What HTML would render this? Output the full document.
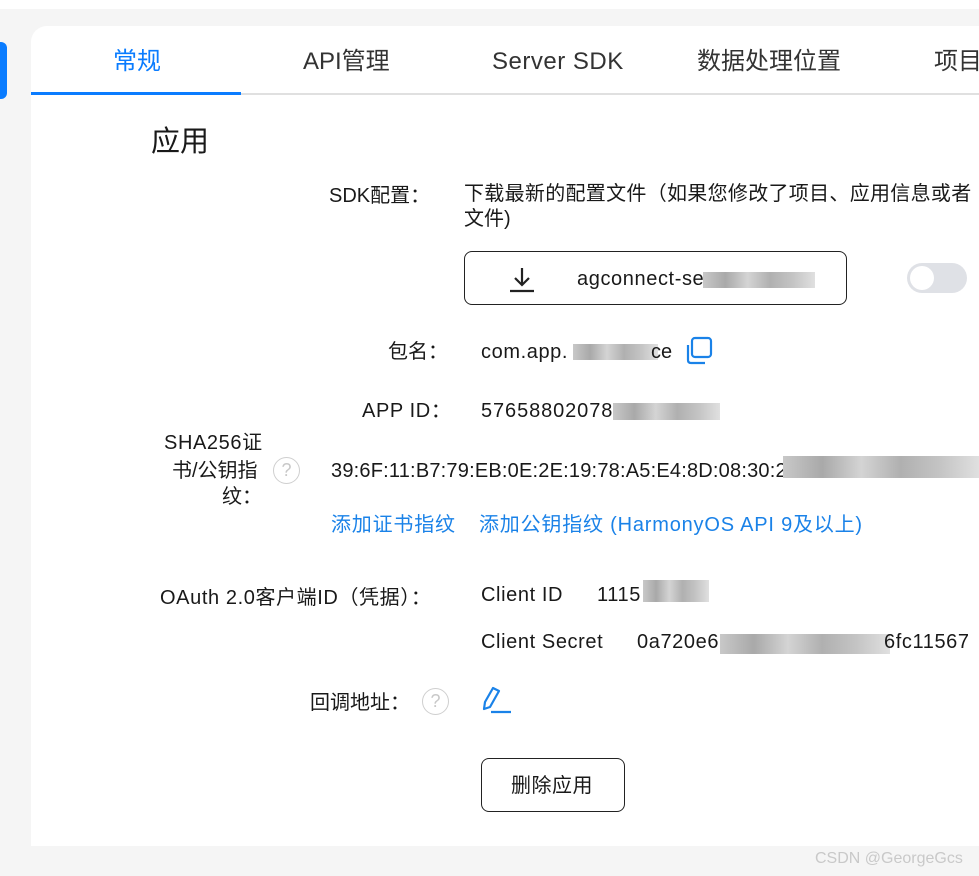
<!DOCTYPE html>
<html><head><meta charset="utf-8"><style>
*{margin:0;padding:0;box-sizing:border-box}
body{width:979px;height:876px;background:#f5f5f5;position:relative;overflow:hidden;font-family:"Liberation Sans","Noto Sans CJK SC",sans-serif;color:#191919}
.top{position:absolute;left:0;top:0;width:979px;height:9px;background:#fff}
.pill{position:absolute;left:-6px;top:42px;width:13px;height:57px;background:#0a7cff;border-radius:6px}
.card{position:absolute;left:31px;top:26px;width:960px;height:820px;background:#fff;border-radius:16px 0 0 0}
.t{position:absolute;white-space:nowrap;font-size:20px;line-height:24px}
.ls{letter-spacing:0.6px}
.tab{position:absolute;top:48px;font-size:24px;line-height:28px;color:#333;white-space:nowrap}
.blur{position:absolute;background:linear-gradient(90deg,#c8c8c8,#a9a9a9,#d4d4d4,#b0b0b0,#c4c4c4,#e0e0e0)}
.blue{color:#1a82e8}
.q{position:absolute;width:27px;height:27px;border:1.5px solid #cfcfcf;border-radius:50%;color:#c8c8c8;font-size:18px;line-height:24px;text-align:center}
</style></head><body>
<div class="top"></div>
<div class="pill"></div>
<div class="card"></div>
<div class="tab" style="left:113px;color:#0a7cff">常规</div>
<div class="tab" style="left:303px">API管理</div>
<div class="tab" style="left:492px;letter-spacing:0.5px">Server SDK</div>
<div class="tab" style="left:697px">数据处理位置</div>
<div class="tab" style="left:934px">项目</div>
<div style="position:absolute;left:240px;top:93px;width:739px;height:2px;background:#e0e0e0"></div>
<div style="position:absolute;left:31px;top:92px;width:210px;height:3px;background:#0a7cff"></div>

<div class="t" style="left:151px;top:124px;font-size:29px;line-height:36px">应用</div>
<div class="t" style="left:329px;top:184px">SDK配置：</div>
<div class="t" style="left:464px;top:182px;letter-spacing:0.3px">下载最新的配置文件（如果您修改了项目、应用信息或者</div>
<div class="t" style="left:464px;top:207px">文件)</div>
<div style="position:absolute;left:464px;top:251px;width:383px;height:54px;border:1.5px solid #222;border-radius:8px"></div>
<svg style="position:absolute;left:507px;top:264px" width="30" height="30" viewBox="0 0 30 30"><path d="M15 4V21M8 14L15 21L22 14M3 27H27" stroke="#222" stroke-width="2.2" fill="none"/></svg>
<div class="t ls" style="left:577px;top:267px">agconnect-se</div>
<div class="blur" style="left:703px;top:272px;width:112px;height:16px"></div>
<div style="position:absolute;left:907px;top:263px;width:60px;height:30px;border-radius:15px;background:#dfe1e6"></div>
<div style="position:absolute;left:910px;top:266px;width:24px;height:24px;border-radius:50%;background:#fff"></div>

<div class="t" style="left:388px;top:340px">包名：</div>
<div class="t ls" style="left:481px;top:340px">com.app.</div>
<div class="blur" style="left:573px;top:344px;width:85px;height:16px"></div>
<div class="t" style="left:651px;top:340px">ce</div>
<svg style="position:absolute;left:684px;top:336px" width="30" height="30" viewBox="0 0 30 30"><rect x="8" y="2" width="19" height="19" rx="3" stroke="#1a82e8" stroke-width="2.2" fill="none"/><path d="M4 9V24Q4 27 7 27H21" stroke="#1a82e8" stroke-width="2.2" fill="none"/></svg>

<div class="t ls" style="left:362px;top:399px">APP ID：</div>
<div class="t" style="left:481px;top:399px;letter-spacing:0.9px">57658802078</div>
<div class="blur" style="left:613px;top:403px;width:107px;height:17px"></div>

<div class="t ls" style="left:164px;top:431px">SHA256证</div>
<div class="t" style="left:172px;top:459px">书/公钥指</div>
<div class="t" style="left:222px;top:485px">纹：</div>
<div class="q" style="left:273px;top:457px">?</div>
<div class="t" style="left:331px;top:459px;letter-spacing:0.2px">39:6F:11:B7:79:EB:0E:2E:19:78:A5:E4:8D:08:30:20:</div>
<div class="blur" style="left:783px;top:456px;width:196px;height:22px"></div>

<div class="t blue" style="left:331px;top:513px;letter-spacing:0.8px">添加证书指纹</div>
<div class="t blue" style="left:479px;top:513px;letter-spacing:0.8px">添加公钥指纹 (HarmonyOS API 9及以上)</div>

<div class="t ls" style="left:160px;top:586px">OAuth 2.0客户端ID（凭据）：</div>
<div class="t ls" style="left:481px;top:583px">Client ID</div>
<div class="t ls" style="left:597px;top:583px">1115</div>
<div class="blur" style="left:643px;top:580px;width:66px;height:22px"></div>
<div class="t ls" style="left:481px;top:630px">Client Secret</div>
<div class="t ls" style="left:637px;top:630px">0a720e6</div>
<div class="blur" style="left:720px;top:634px;width:170px;height:20px"></div>
<div class="t ls" style="left:884px;top:630px">6fc11567</div>

<div class="t" style="left:310px;top:691px">回调地址：</div>
<div class="q" style="left:422px;top:688px">?</div>
<svg style="position:absolute;left:481px;top:685px" width="32" height="32" viewBox="0 0 32 32"><path d="M12 3L18 6L9 22L3 24L4 17Z" stroke="#1a82e8" stroke-width="2.2" fill="none" stroke-linejoin="round"/><path d="M10 27H30" stroke="#1a82e8" stroke-width="2.2"/></svg>

<div style="position:absolute;left:481px;top:758px;width:144px;height:54px;border:1.5px solid #222;border-radius:8px"></div>
<div class="t" style="left:511px;top:774px;letter-spacing:0.5px">删除应用</div>

<div class="t" style="left:815px;top:847px;font-size:16px;color:#c9c9c9">CSDN @GeorgeGcs</div>
</body></html>
